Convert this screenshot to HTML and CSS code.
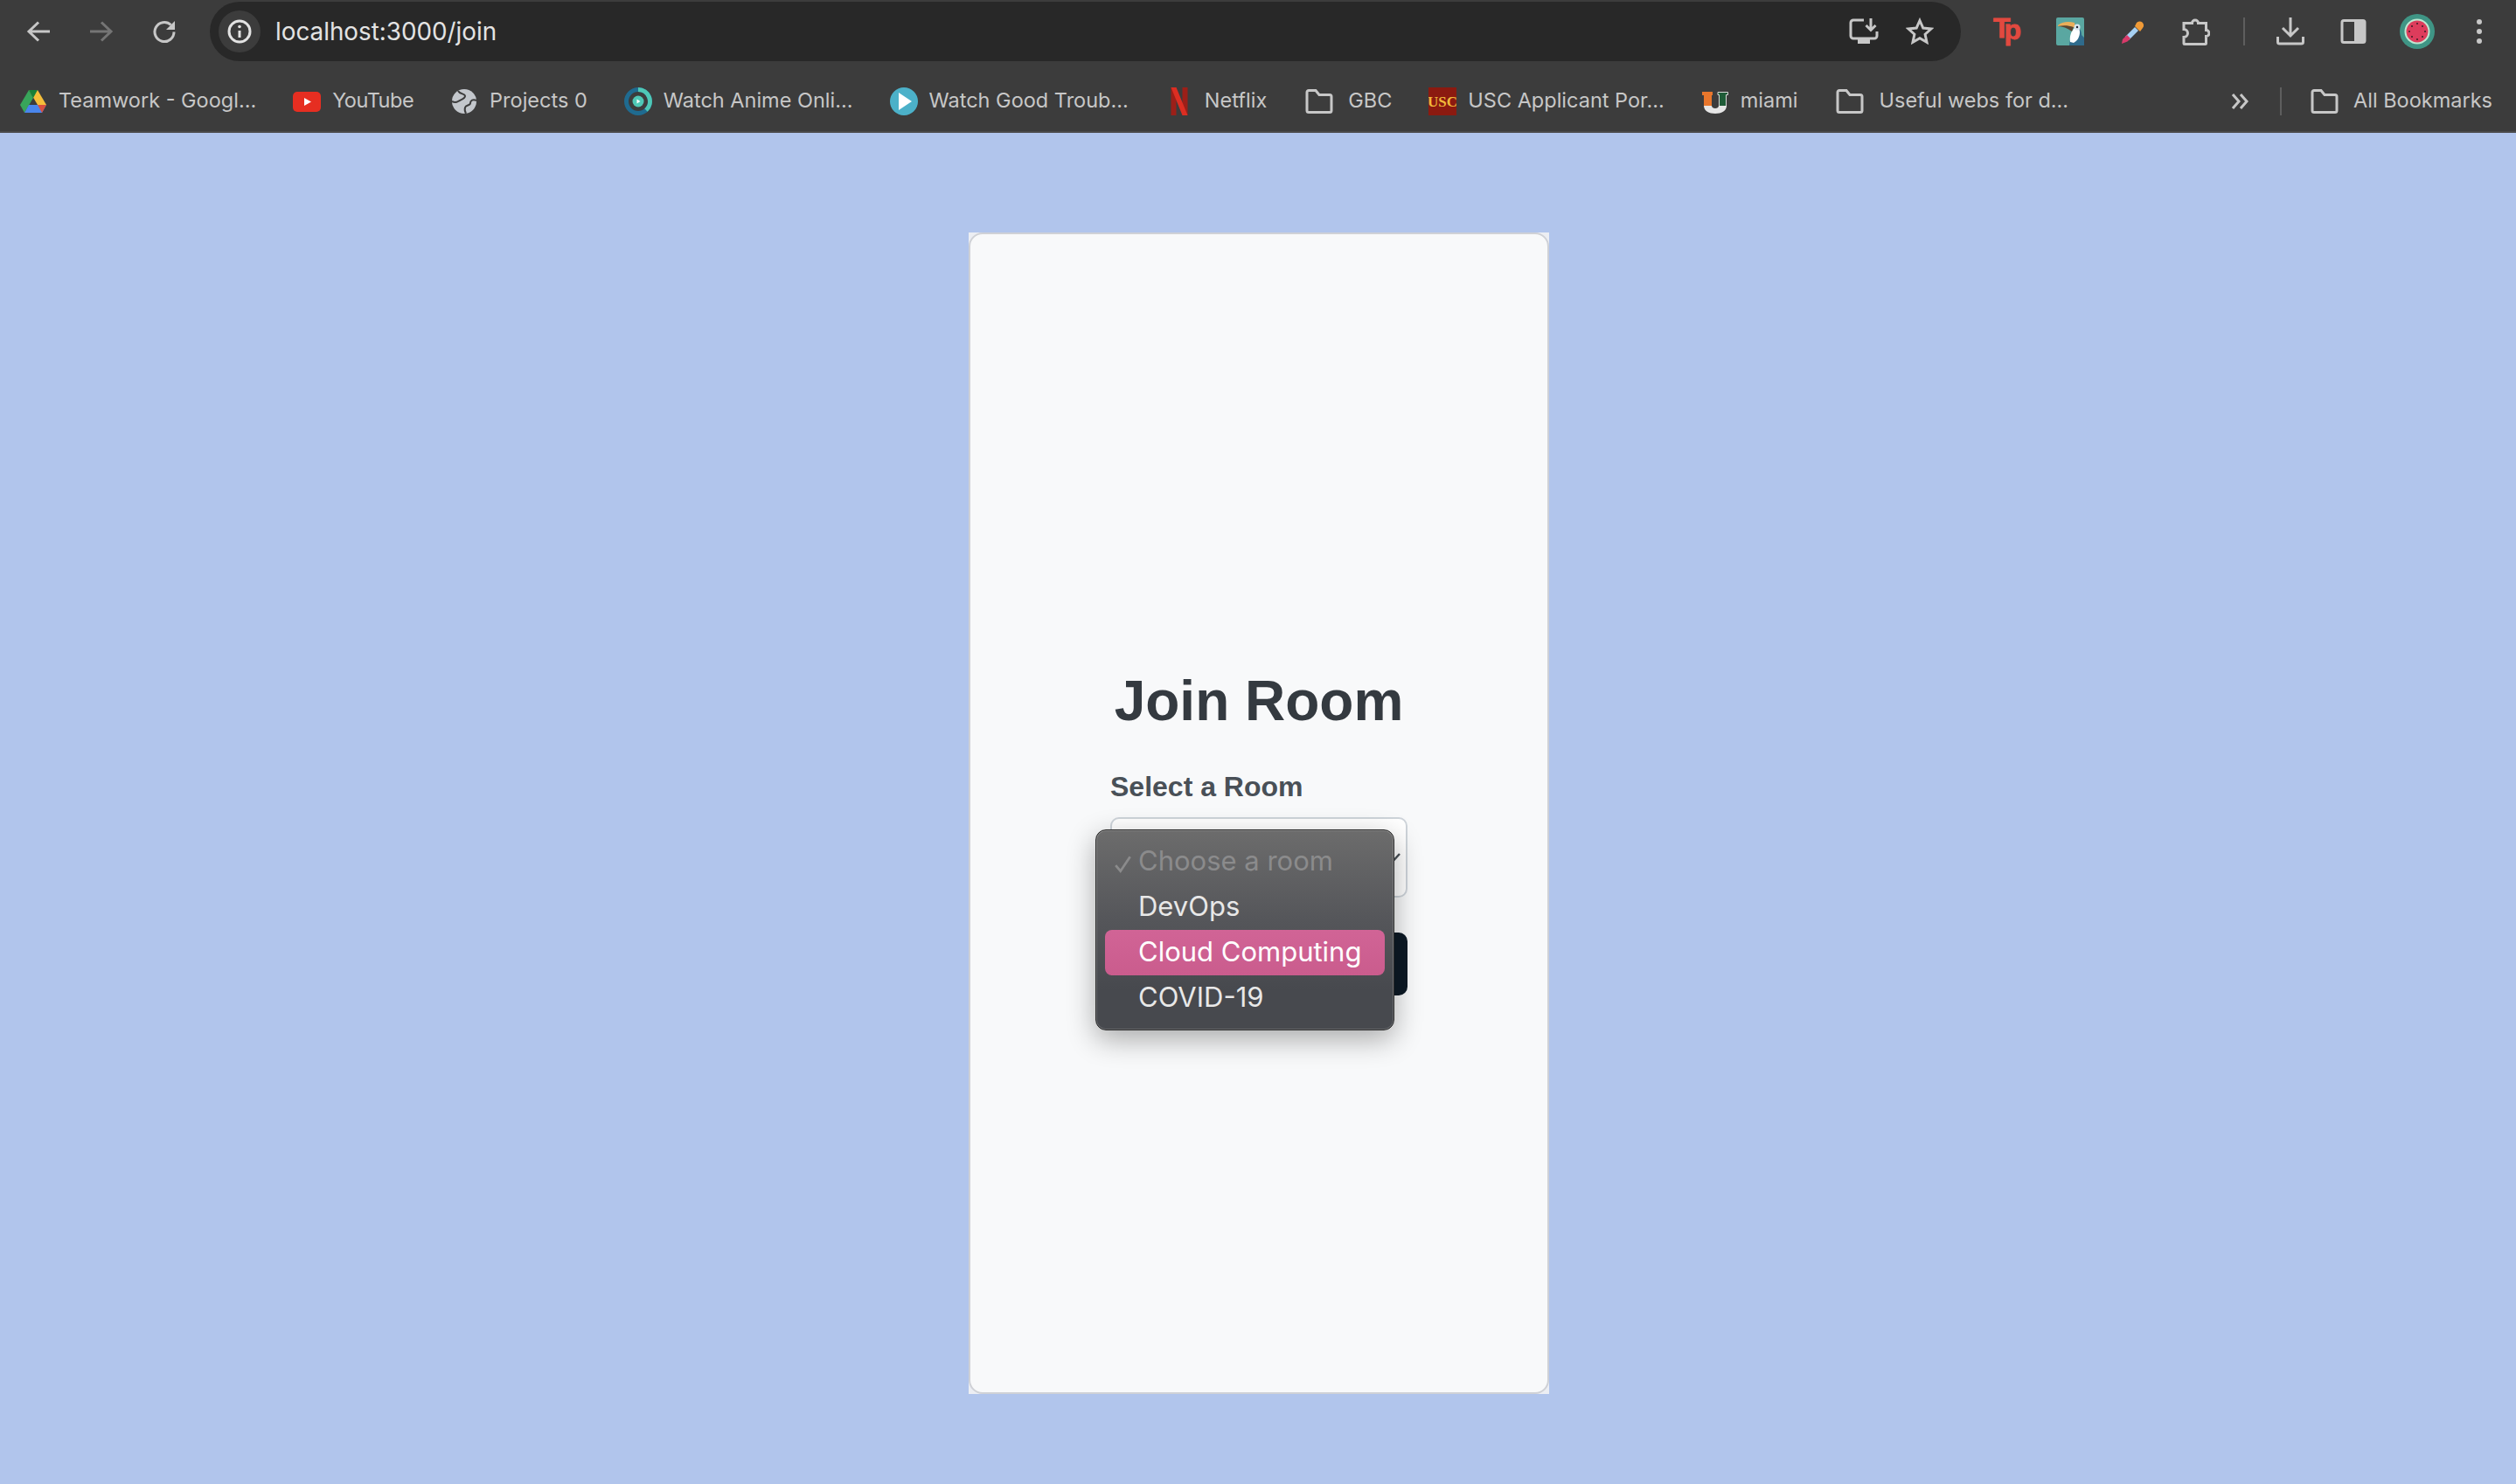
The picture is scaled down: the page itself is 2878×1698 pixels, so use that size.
FILE: index.html
```html
<!DOCTYPE html>
<html lang="en">

<head>
    <meta charset="UTF-8">
    <meta name="viewport" content="width=device-width, initial-scale=1.0">
    <title>Join Room</title>
    <link rel="stylesheet" href="styles.css">
</head>

<body>
    <div class="toolbar">
        <div class="nav-buttons">
            <svg class="icon" viewBox="0 0 32 32"><path d="M29 16H6M16 5.500 5 16l11 10.500"/></svg>
            <svg class="icon dim" viewBox="0 0 32 32"><path d="M3 16h23M16 5.500 27 16 16 26.500"/></svg>
            <svg class="icon" viewBox="0 0 32 32"><path d="M27 16.500A11 11 0 1 1 23.500 8.500"/><path class="solid" d="M28 4v10H18z"/></svg>
        </div>
        <div class="omnibox">
            <div class="site-info">
                <svg class="icon" viewBox="0 0 32 32"><circle cx="16" cy="16" r="12"/><path d="M16 15v8"/><circle class="solid" cx="16" cy="10.500" r="1.800"/></svg>
            </div>
            <span class="url">localhost:3000/join</span>
            <div class="omnibox-actions">
                <svg class="icon" viewBox="0 0 34 32"><path d="M17 3H5a3 3 0 0 0-3 3v15a3 3 0 0 0 3 3h24a3 3 0 0 0 3-3v-5"/><path class="solid" d="M10 24h14v6H10z"/><path d="M25 1v13M19.500 9l5.500 5.500L30.500 9"/></svg>
                <svg class="icon" viewBox="0 0 32 32"><path d="M16 3.500l3.800 8.500 9.200 1-6.900 6.200 1.900 9.100L16 23.700l-8 4.600 1.900-9.100L3 13l9.200-1z"/></svg>
            </div>
        </div>
        <div class="extensions">
            <svg class="ext" viewBox="0 0 32 32"><text class="tp-mark" x="0" y="23">T<tspan dy="2">p</tspan></text></svg>
            <svg class="ext" viewBox="0 0 32 32">
                <rect width="32" height="32" rx="2" fill="#5aa7a1"/>
                <path d="M15 32c1-8 3-16 8-20 4 0 6 3 6 8l3 3v9z" fill="#2f6b8c"/>
                <path d="M16 28c-1-6 1-13 6-17 4 0 5 3 5 6 0 5-3 10-7 12z" fill="#fff"/>
                <path d="M2 9c4-4 12-5 19-3l1 6c-7-2-15-2-20-2z" fill="#eaae5a"/>
                <path d="M2 10c6-1 12-1 18 1-1 2-1 3-2 5-5-4-11-6-16-6z" fill="#5a4632"/>
                <circle cx="24" cy="11" r="3.500" fill="#d7e6ee"/>
                <circle cx="24" cy="11" r="1.200" fill="#223"/>
            </svg>
            <svg class="ext" viewBox="0 0 32 32">
                <path d="M20 6a4.500 4.500 0 0 1 7 6l-3 4-6-6z" fill="#ef9a37"/>
                <path d="M18 11l4 4-11 11-4-4z" fill="#a6d0f2"/>
                <path d="M9 20l4 4-3.500 3.500L3 30l1-5z" fill="#d93a6a"/>
            </svg>
            <svg class="icon" viewBox="0 0 32 32"><path d="M2 6.500h9.500a3.500 3.500 0 0 1 7 0h9v8a3.500 3.500 0 0 1 0 7v8a1 1 0 0 1-1 1H3a1 1 0 0 1-1-1v-7a4.500 4.500 0 0 0 0-9z"/></svg>
            <span class="toolbar-sep"></span>
            <svg class="icon" viewBox="0 0 32 32"><path d="M16 0v21M7 12l9 9 9-9M1.500 22v6a2 2 0 0 0 2 2h25a2 2 0 0 0 2-2v-6"/></svg>
            <svg class="icon" viewBox="0 0 32 32"><rect x="3" y="3.500" width="26" height="25" rx="2"/><path class="solid" d="M17 3h10a2 2 0 0 1 2 2v22a2 2 0 0 1-2 2H17z"/></svg>
            <svg class="avatar" viewBox="0 0 40 40">
                <circle cx="20" cy="20" r="20" fill="#3f9585"/>
                <circle cx="20" cy="20" r="14.500" fill="#bfe8d2"/>
                <circle cx="20" cy="20" r="12.500" fill="#dd3c5c"/>
                <g fill="#3a1a24"><circle cx="20" cy="11" r="1"/><circle cx="26" cy="14" r="1"/><circle cx="29" cy="20" r="1"/><circle cx="26" cy="26" r="1"/><circle cx="20" cy="29" r="1"/><circle cx="14" cy="26" r="1"/><circle cx="11" cy="20" r="1"/><circle cx="14" cy="14" r="1"/></g>
            </svg>
            <svg class="menu-dots" viewBox="0 0 32 32"><circle cx="16" cy="5" r="3"/><circle cx="16" cy="16" r="3"/><circle cx="16" cy="27" r="3"/></svg>
        </div>
    </div>

    <div class="bookmarks">
        <a class="bookmark">
            <svg class="favicon" viewBox="-1 -2 32 32">
                <path d="M10 1h10l10 17H20z" fill="#f6bf3a"/>
                <path d="M10 1l5 9L5 27l-5-9z" fill="#38a55a"/>
                <path d="M10 1h10l-5 9z" fill="#188038"/>
                <path d="M5 27l5-9h20l-5 9z" fill="#4a86ec"/>
                <path d="M20 18h10l-5 9z" fill="#d9503f"/>
            </svg>
            <span>Teamwork - Googl...</span>
        </a>
        <a class="bookmark bookmark-tight">
            <svg class="favicon" viewBox="0 0 32 32"><rect y="5" width="32" height="23" rx="5" fill="#e62e21"/><path d="M13 12l8 4.500-8 4.500z" fill="#fff"/></svg>
            <span>YouTube</span>
        </a>
        <a class="bookmark">
            <svg class="favicon" viewBox="0 0 32 32">
                <circle cx="16" cy="16" r="14" fill="#c3c7cc"/>
                <path d="M9 4c2 4 8 3 8 6s-5 4-8 6-5 1-7 0" fill="none" stroke="#3c3c3c" stroke-width="2"/>
                <path d="M30 15c-4-2-7 0-7 3s-5 2-6 5 0 5 1 7" fill="none" stroke="#3c3c3c" stroke-width="2"/>
            </svg>
            <span>Projects 0</span>
        </a>
        <a class="bookmark">
            <svg class="favicon" viewBox="0 0 32 32">
                <circle cx="16" cy="16" r="13.500" fill="none" stroke="#1f6b90" stroke-width="5"/>
                <path d="M16 2.500A13.500 13.500 0 0 1 25 26" fill="none" stroke="#4fc8b6" stroke-width="5"/>
                <circle cx="16" cy="16" r="6.500" fill="#4fc8b6"/>
                <path d="M14.500 13.500l4 2.500-4 2.500z" fill="#fff"/>
            </svg>
            <span>Watch Anime Onli...</span>
        </a>
        <a class="bookmark">
            <svg class="favicon" viewBox="0 0 32 32"><circle cx="16" cy="16" r="16" fill="#4cb1c9"/><path d="M10 6l15 10-15 10z" fill="#fff"/></svg>
            <span>Watch Good Troub...</span>
        </a>
        <a class="bookmark">
            <svg class="favicon" viewBox="-6.500 0 32 32">
                <path d="M0 0h6v32H0zM13 0h6v32h-6z" fill="#9c1f18"/>
                <path d="M0 0h6l13 32h-6z" fill="#dc2e22"/>
            </svg>
            <span>Netflix</span>
        </a>
        <a class="bookmark bookmark-folder">
            <svg class="icon favicon" viewBox="0 0 32 32"><path d="M2 5.500a2 2 0 0 1 2-2h8l4 5h12a2 2 0 0 1 2 2v16a2 2 0 0 1-2 2H4a2 2 0 0 1-2-2z"/></svg>
            <span>GBC</span>
        </a>
        <a class="bookmark">
            <svg class="favicon" viewBox="0 0 32 32"><rect width="32" height="32" fill="#8b1a10"/><text class="usc-mark" x="16" y="22">USC</text></svg>
            <span>USC Applicant Por...</span>
        </a>
        <a class="bookmark">
            <svg class="favicon" viewBox="0 0 32 32">
                <path d="M1 5h12v4h-1v13H3V9H1z" fill="#e8762c"/>
                <path d="M19 5.500h11.500v3h-2V22h-8V8.500H19z" fill="#1f5c38" stroke="#d8d8d8"/>
                <path d="M3 21h9c0 2 2 3 4 3s4-1 4-3h9c0 6-6 9-13 9S3 27 3 21z" fill="#e6e6e6"/>
            </svg>
            <span>miami</span>
        </a>
        <a class="bookmark bookmark-folder">
            <svg class="icon favicon" viewBox="0 0 32 32"><path d="M2 5.500a2 2 0 0 1 2-2h8l4 5h12a2 2 0 0 1 2 2v16a2 2 0 0 1-2 2H4a2 2 0 0 1-2-2z"/></svg>
            <span>Useful webs for d...</span>
        </a>
        <div class="bookmarks-end">
            <svg class="icon chevrons" viewBox="0 0 22 22"><path d="M3 3l7 8-7 8M12 3l7 8-7 8"/></svg>
            <span class="bookmarks-sep"></span>
            <a class="bookmark">
                <svg class="icon favicon" viewBox="0 0 32 32"><path d="M2 5.500a2 2 0 0 1 2-2h8l4 5h12a2 2 0 0 1 2 2v16a2 2 0 0 1-2 2H4a2 2 0 0 1-2-2z"/></svg>
                <span>All Bookmarks</span>
            </a>
        </div>
    </div>

    <main class="page">
        <div class="card-frame">
            <form class="card">
                <h1 class="title">Join Room</h1>
                <div class="form-block">
                    <label class="field-label">Select a Room</label>
                    <div class="select-wrap">
                        <div class="select-box">
                            <svg class="select-arrow" viewBox="0 0 24 24"><path d="M1 2l11 12L23 2"/></svg>
                        </div>
                        <div class="popup">
                            <div class="popup-row popup-disabled">
                                <svg class="popup-check" viewBox="0 0 20 18"><path d="M2 10l5 6 10-15"/></svg>
                                Choose a room
                            </div>
                            <div class="popup-row">DevOps</div>
                            <div class="popup-row popup-active">Cloud Computing</div>
                            <div class="popup-row">COVID-19</div>
                        </div>
                    </div>
                    <button class="join-btn" type="button" aria-label="Join"></button>
                </div>
            </form>
        </div>
    </main>
</body>

</html>
```
FILE: styles.css
```css
* {
    box-sizing: border-box;
}

body {
    margin: 0;
    height: 1698px;
    overflow: hidden;
    font-family: "Liberation Sans", Arial, sans-serif;
    background-color: #b1c5ec;
}

/* browser chrome */
.toolbar {
    display: flex;
    align-items: flex-end;
    height: 70px;
    background-color: #3c3c3c;
}

.icon {
    width: 32px;
    height: 32px;
    flex-shrink: 0;
    fill: none;
    stroke: #c7c7c7;
    stroke-width: 3;
}

.icon .solid {
    fill: #c7c7c7;
    stroke: none;
}

.icon.dim {
    stroke: #757575;
}

.nav-buttons {
    display: flex;
    align-items: center;
    gap: 40px;
    height: 68px;
    padding-left: 28px;
    width: 240px;
}

.omnibox {
    display: flex;
    align-items: center;
    width: 2003px;
    height: 68px;
    padding-left: 10px;
    border-radius: 34px;
    background-color: #282828;
}

.site-info {
    display: flex;
    align-items: center;
    justify-content: center;
    width: 48px;
    height: 48px;
    border-radius: 50%;
    background-color: #3c3c3c;
}

.site-info .icon {
    stroke: #e3e3e3;
}

.site-info .icon .solid {
    fill: #e3e3e3;
}

.url {
    margin-left: 17px;
    font-family: Inter, "Liberation Sans", sans-serif;
    font-size: 27.800px;
    color: #e3e3e3;
}

.omnibox-actions {
    display: flex;
    align-items: center;
    gap: 31px;
    margin-left: auto;
    padding-right: 31px;
}

.omnibox-actions .icon:first-child {
    width: 34px;
}

.extensions {
    display: flex;
    align-items: center;
    gap: 40px;
    height: 68px;
    margin-left: 37px;
}

.ext {
    width: 32px;
    height: 32px;
    flex-shrink: 0;
    overflow: visible;
}

.tp-mark {
    font-family: "Liberation Sans", sans-serif;
    font-size: 32px;
    font-weight: bold;
    letter-spacing: -7px;
    fill: #e2493f;
    stroke: #e2493f;
    stroke-width: 0.800;
}

.toolbar-sep {
    width: 2px;
    height: 32px;
    margin-right: -4px;
    margin-left: -2px;
    background-color: #5e5e5e;
}

.avatar {
    width: 40px;
    height: 40px;
    margin-left: -3px;
    margin-right: -5px;
    flex-shrink: 0;
}

.menu-dots {
    width: 32px;
    height: 32px;
    fill: #c7c7c7;
}

.bookmarks {
    display: flex;
    align-items: center;
    gap: 42px;
    height: 82px;
    padding: 12px 27px 0 22px;
    border-bottom: 2px solid #4a4a4a;
    background-color: #3c3c3c;
    font-family: Inter, "Liberation Sans", sans-serif;
    font-size: 23.500px;
    color: #c7c7c7;
}

.bookmark {
    display: flex;
    align-items: center;
    gap: 13px;
    white-space: nowrap;
}

.bookmark span {
    margin-bottom: 3px;
}

.bookmark-tight span {
    letter-spacing: -0.500px;
}

.bookmark-folder {
    gap: 17px;
    margin-left: 2px;
}

.favicon {
    width: 32px;
    height: 32px;
    flex-shrink: 0;
}

.usc-mark {
    font-family: "Liberation Serif", serif;
    font-size: 17px;
    font-weight: bold;
    text-anchor: middle;
    fill: #f0b93a;
}

.bookmarks-end {
    display: flex;
    align-items: center;
    margin-left: auto;
}

.bookmarks-end .bookmark {
    gap: 17px;
}

.chevrons {
    width: 22px;
    height: 22px;
}

.bookmarks-sep {
    width: 2px;
    height: 32px;
    margin: 0 33px 0 35px;
    background-color: #5e5e5e;
}

/* page */
.page {
    display: flex;
    justify-content: center;
    padding: 114px 0 0 2px;
}

.card-frame {
    width: 664px;
    height: 1329px;
    background-color: #eceef3;
}

.card {
    display: flex;
    flex-direction: column;
    align-items: center;
    height: 100%;
    padding-top: 496px;
    border: 2px solid #cfd1d6;
    border-radius: 16px;
    background-color: #f8f9fa;
}

.title {
    margin: 0 0 40px;
    font-size: 64px;
    line-height: 77px;
    font-weight: bold;
    color: #343a40;
}

.form-block {
    width: 340px;
}

.field-label {
    display: block;
    margin-bottom: 16px;
    font-size: 32px;
    line-height: 38px;
    font-weight: bold;
    color: #495057;
}

.select-wrap {
    position: relative;
    margin-bottom: 40px;
}

.select-box {
    display: flex;
    align-items: center;
    justify-content: flex-end;
    height: 92px;
    padding-right: 6px;
    border: 2px solid #ced4da;
    border-radius: 10px;
    background-color: #fff;
}

.select-arrow {
    width: 24px;
    height: 24px;
    margin-top: 12px;
    fill: none;
    stroke: #495057;
    stroke-width: 2.500;
}

.popup {
    position: absolute;
    top: 14px;
    left: -17px;
    width: 342px;
    height: 230px;
    padding: 10px;
    border: 1px solid #2b2b2b;
    border-radius: 12px;
    background: linear-gradient(#6c6c6c, #55565a 45%, #47494e 80%);
    box-shadow: inset 0 0 0 1px rgba(255, 255, 255, 0.18), 0 10px 32px rgba(0, 0, 0, 0.32);
    font-family: Inter, "Liberation Sans", sans-serif;
    font-size: 31px;
    color: #e8e8e8;
}

.popup-row {
    position: relative;
    display: flex;
    align-items: center;
    height: 52px;
    padding: 0 0 4px 38px;
    border-radius: 8px;
    white-space: nowrap;
}

.popup-disabled {
    color: #8b8b8c;
}

.popup-active {
    background: linear-gradient(#d16496, #ca5c8d);
    color: #fff;
}

.popup-check {
    position: absolute;
    left: 10px;
    top: 19px;
    width: 22px;
    height: 20px;
    fill: none;
    stroke: #8b8b8c;
    stroke-width: 2.500;
}

.join-btn {
    display: block;
    width: 100%;
    height: 72px;
    border: none;
    border-radius: 10px;
    background-color: #0d1a26;
}
```
